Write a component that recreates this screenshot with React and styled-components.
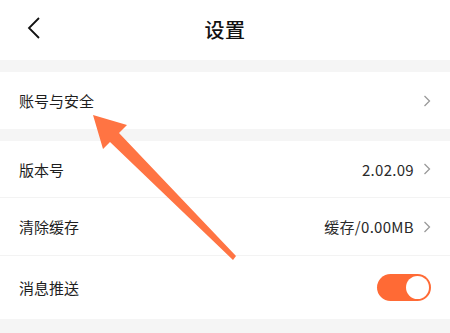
import React from 'react';
import styled, { createGlobalStyle } from 'styled-components';

const GlobalStyle = createGlobalStyle`
  html, body {
    margin: 0;
    padding: 0;
    background: #f5f5f5;
  }
  body {
    font-family: "Noto Sans CJK SC", "Noto Sans", sans-serif;
  }
`;

const Page = styled.div`
  position: relative;
  width: 450px;
  height: 333px;
  overflow: hidden;
  background: #f5f5f5;
`;

const Header = styled.div`
  height: 60px;
  background: #fff;
  display: flex;
  align-items: center;
  justify-content: center;
  position: relative;
`;

const BackButton = styled.div`
  position: absolute;
  left: 22px;
  top: 13px;
  width: 24px;
  height: 30px;
  display: flex;
  align-items: center;
  justify-content: center;
`;

const Title = styled.h1`
  margin: 0 0 2px 0;
  font-size: 20px;
  font-weight: 500;
  color: #111;
  letter-spacing: 0.5px;
`;

const Group = styled.div`
  margin-top: ${p => p.$gap || 12}px;
  background: #fff;
`;

const Row = styled.div`
  height: ${p => p.$h || 57}px;
  display: flex;
  align-items: center;
  padding: 0 19px 0 19px;
  border-top: ${p => (p.$divider ? '1px solid #f3f3f3' : 'none')};
  box-sizing: border-box;
`;

const Label = styled.span`
  flex: 1;
  font-size: 15px;
  color: #1e1e1e;
`;

const Value = styled.span`
  font-size: 15px;
  color: #2a2a2a;
  margin-right: 9px;
  letter-spacing: 0.3px;
`;

const Toggle = styled.div`
  width: 54px;
  height: 27px;
  border-radius: 14px;
  background: #ff6a35;
  display: flex;
  align-items: center;
  justify-content: flex-end;
  padding: 0 2px;
  box-sizing: border-box;
`;

const Knob = styled.div`
  width: 23px;
  height: 23px;
  border-radius: 50%;
  background: #fff;
`;

const Overlay = styled.svg`
  position: absolute;
  left: 0;
  top: 0;
  pointer-events: none;
`;

const Chevron = () => (
  <svg width="8" height="12" viewBox="0 0 8 12">
    <path d="M1.5 1 L6.5 6 L1.5 11" fill="none" stroke="#9a9a9a" strokeWidth="1.3" />
  </svg>
);

export default function App() {
  return (
    <Page>
      <GlobalStyle />
      <Header>
        <BackButton>
          <svg width="14" height="24" viewBox="0 0 14 24">
            <path d="M12 2 L2 12 L12 22" fill="none" stroke="#111" strokeWidth="1.8" />
          </svg>
        </BackButton>
        <Title>设置</Title>
      </Header>
      <Group $gap={12}>
        <Row $h={57}>
          <Label>账号与安全</Label>
          <Chevron />
        </Row>
      </Group>
      <Group $gap={12}>
        <Row $h={56}>
          <Label>版本号</Label>
          <Value>2.02.09</Value>
          <Chevron />
        </Row>
        <Row $h={58} $divider>
          <Label>清除缓存</Label>
          <Value>缓存/0.00MB</Value>
          <Chevron />
        </Row>
        <Row $h={64} $divider>
          <Label>消息推送</Label>
          <Toggle>
            <Knob />
          </Toggle>
        </Row>
      </Group>
      <Overlay width="450" height="333" viewBox="0 0 450 333">
        <polygon
          points="93,115 127,125 119,133 236,256 233,260 110,142 103,149"
          fill="#ff7443"
          strokeLinejoin="round"
        />
      </Overlay>
    </Page>
  );
}
